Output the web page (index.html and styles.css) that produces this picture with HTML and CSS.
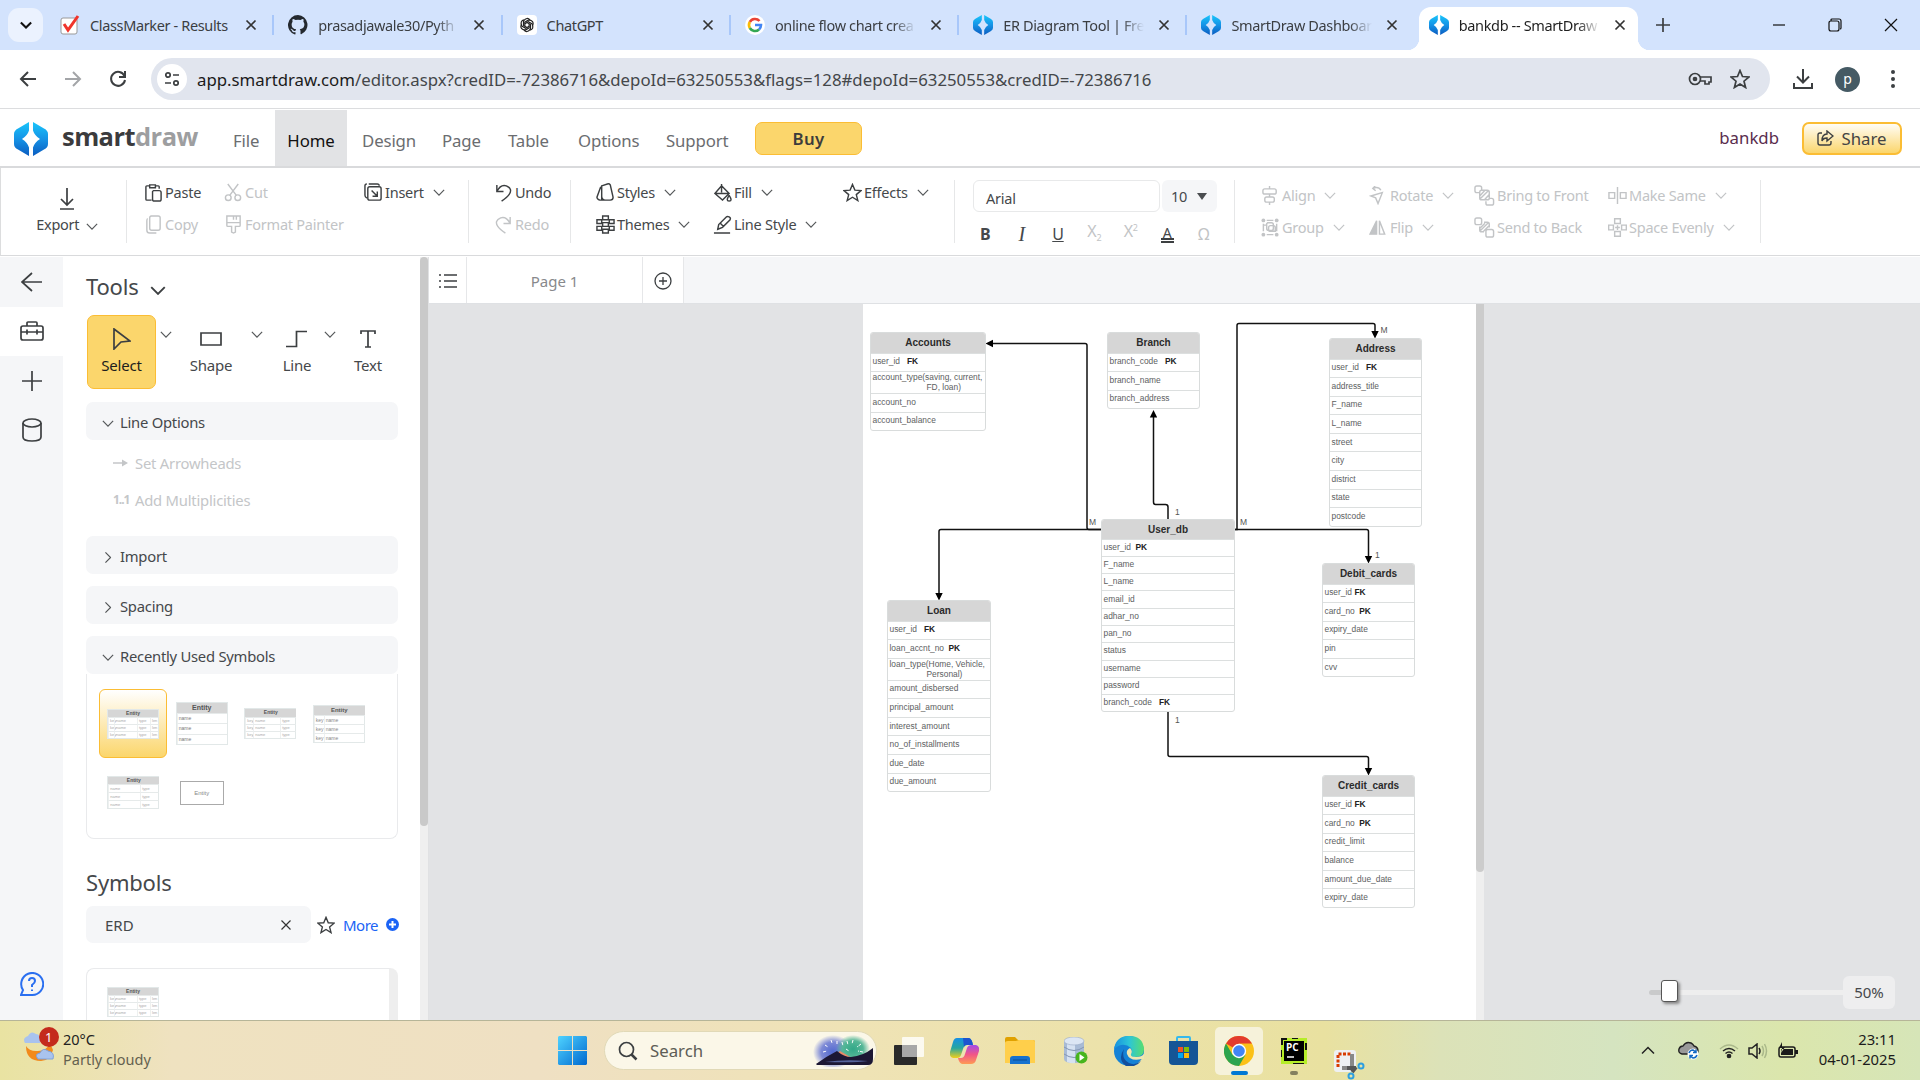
FILE: index.html
```html
<!DOCTYPE html>
<html lang="en">
<head>
<meta charset="utf-8">
<title>bankdb -- SmartDraw</title>
<link rel="stylesheet" href="styles.css">
</head>
<body>
<svg class="defs" width="0" height="0">
  <defs>
    <linearGradient id="sdg" x1="0" y1="0" x2="0" y2="1"><stop offset="0" stop-color="#19c5fb"/><stop offset=".5" stop-color="#1593e6"/><stop offset="1" stop-color="#0b5cc0"/></linearGradient>
    <symbol id="sd" viewBox="0 0 34 34"><path fill="url(#sdg)" d="M15 0v8.500Q13.500 13.500 8 17q5.500 3.500 7 8.500V34L4 27.500Q0 25.500 0 22V12Q0 8.500 4 6.500zM19 0v8.500q1.500 5 7 8.500-5.500 3.500-7 8.500V34l11-6.500q4-2 4-5.500V12q0-3.500-4-5.500z"/></symbol>
    <symbol id="close" viewBox="0 0 12 12"><path d="M1.500 1.500l9 9m0-9l-9 9"/></symbol>
    <symbol id="down" viewBox="0 0 14 8"><path d="M1 1l6 6 6-6"/></symbol>
    <symbol id="star" viewBox="0 0 20 20"><path d="M10 1.500l2.500 6 6.500.5-5 4.200 1.600 6.300L10 15l-5.600 3.500L6 12.200 1 8l6.500-.5z"/></symbol>
    <symbol id="paste" viewBox="0 0 20 20"><path d="M6 3H3a1 1 0 0 0-1 1v13a1 1 0 0 0 1 1h5M12 3h3a1 1 0 0 1 1 1v2M6 2h6v3H6zM10 8h6q2 0 2 2v7q0 2-2 2h-5q-2 0-2-2V9z"/></symbol>
    <symbol id="copy" viewBox="0 0 20 20"><path d="M7 1h8q2 0 2 2v11q0 2-2 2H8q-2 0-2-2V3q0-2 2-2M4 4q-1 0-1 2v10q0 3 3 3h7"/></symbol>
    <symbol id="cut" viewBox="0 0 20 20"><path d="M4 1l9 12M15 1L6 13"/><circle cx="4.500" cy="15.500" r="3"/><circle cx="14.500" cy="15.500" r="3"/></symbol>
    <symbol id="brush" viewBox="0 0 20 20"><path d="M3 1h14v10q0 1-1 1h-4v6l-2 1-2-1v-6H4q-1 0-1-1zM3 8h14M10 1v4M13 1v4"/></symbol>
    <symbol id="insert" viewBox="0 0 20 20"><path d="M5 1h9q2 0 2 2M3 1q-2 0-2 2v10q0 2 2 3M6 4h10q2 0 2 2v10q0 2-2 2H6q-2 0-2-2V6q0-2 2-2M8 8l6 6M14 9v5H9"/></symbol>
    <symbol id="undo" viewBox="0 0 20 20"><path d="M3 2v7h7M3 9Q7 1 13 3q7 3 3 9-2 3-8 7"/></symbol>
    <symbol id="redo" viewBox="0 0 20 20"><path d="M17 2v7h-7M17 9Q13 1 7 3 0 6 4 12q2 3 8 7"/></symbol>
    <symbol id="styles" viewBox="0 0 20 20"><path d="M6 3l6-2q2-.5 3 1l3 13q0 3-3 3H6zM5 4L1 15q0 2 3 3h4M6 4v10q0 4 4 4"/></symbol>
    <symbol id="themes" viewBox="0 0 20 20"><path d="M7 1h6v4H7zM7 8h6v4H7zM7 15h6v4H7zM1 5h5v4H1zM1 12h5v4H1zM14 5h5v4h-5zM14 12h5v4h-5z"/></symbol>
    <symbol id="fill" viewBox="0 0 20 20"><path d="M9 1v9M9 3l8 8-7 7-8-7zM2 11h14M17 13q-4 6 0 6t0-6"/></symbol>
    <symbol id="pen" viewBox="0 0 20 20"><path d="M1 19h17M5 15l1-5 8-8q1-1 3 0t1 3l-8 8zM8 9l3 3"/></symbol>
    <symbol id="align" viewBox="0 0 20 20"><path d="M9 0v3M9 8.500v3M9 17v3M4 3h10q2 0 2 2v1.500q0 2-2 2H4q-2 0-2-2V5q0-2 2-2M6 11.500h6q2 0 2 2V15q0 2-2 2H6q-2 0-2-2v-1.500q0-2 2-2"/></symbol>
    <symbol id="group" viewBox="0 0 20 20"><g fill="currentColor" stroke="none"><circle cx="2.500" cy="2.500" r="2"/><circle cx="16.500" cy="2.500" r="2"/><circle cx="2.500" cy="17.500" r="2"/><circle cx="16.500" cy="17.500" r="2"/></g><path d="M6 2.500h7M6 17.500h7M2.500 6v8M16.500 6v8M3 7.500h3M7 5h4q2 0 2 2v4q0 2-2 2H8q-2 0-2-2V6zM10 8h3q2 0 2 2v4H9q-1 0-1-2v-2q0-2 2-2"/></symbol>
    <symbol id="rotate" viewBox="0 0 20 20"><path d="M2 10.500L14 7 9.500 18.500l-2.500-6zM12.500 4.500Q10 0 4 2.500M6.500 0L4 2.500l3 2.500"/></symbol>
    <symbol id="flip" viewBox="0 0 20 20"><path d="M8 3v14H1z" fill="currentColor"/><path d="M11 3v14h5.500z"/></symbol>
    <symbol id="front" viewBox="0 0 22 22"><path d="M5.500 8H3Q1 8 1 6V3q0-2 2-2h3q2 0 2 2v2M16.500 14h2q2 0 2 2v3q0 2-2 2h-4q-2 0-2-2v-2M8 5.500h6q2 0 2 2v6q0 2-2 2H8q-2 0-2-2v-6q0-2 2-2M6.500 11l5-5.500M6.500 14.500l9-9M11 15.500l5-5.500"/></symbol>
    <symbol id="back" viewBox="0 0 22 22"><path d="M3 1h3q2 0 2 2v3q0 2-2 2H3Q1 8 1 6V3q0-2 2-2M14.500 13h4q2 0 2 2v4q0 2-2 2h-4q-2 0-2-2v-4q0-2 2-2M10.500 5.500H14q2 0 2 2V11M6 10v3.500q0 2 2 2h2.500M6.500 14.500l9-9M10 15l5.500-5.500M6.500 11.500l5-5"/></symbol>
    <symbol id="same" viewBox="0 0 20 20"><path d="M10 1v18M1 7h6v6H1zM13 7h6v6h-6z"/></symbol>
    <symbol id="space" viewBox="0 0 20 20"><path d="M7 .700h6v5H7zM7 14.300h6v5H7zM.700 7.500h5v5h-5zM14.300 7.500h5v5h-5zM10 7.500v5M7.500 10h5"/></symbol>
  </defs>
</svg>

<header class="tabs">
  <span class="tabsearch"><svg class="ic" width="12" height="8"><use href="#down"/></svg></span>
  <div class="tab"><svg class="fav" viewBox="0 0 20 20"><rect x="1" y="3" width="16" height="16" rx="2" fill="#fff" stroke="#999"/><path d="M4 9l4 6L18 1" fill="none" stroke="#f0342c" stroke-width="3"/></svg><span class="tt">ClassMarker - Results</span><svg class="x"><use href="#close"/></svg></div>
  <div class="tab"><svg class="fav" viewBox="0 0 16 16"><path fill="#24292f" d="M8 0a8 8 0 0 0-2.500 15.600c.4.100.5-.2.500-.4v-1.500c-2.200.5-2.700-1-2.700-1-.4-.9-.9-1.200-.9-1.200-.7-.5.100-.5.100-.5.800.1 1.200.8 1.200.8.700 1.300 1.900.9 2.300.7.100-.5.300-.9.500-1.100-1.800-.2-3.600-.9-3.600-4 0-.9.300-1.600.8-2.100-.1-.2-.4-1 .1-2.100 0 0 .7-.2 2.200.8a7.600 7.600 0 0 1 4 0c1.500-1 2.200-.8 2.200-.8.400 1.100.2 1.900.1 2.100.5.600.8 1.300.8 2.100 0 3.100-1.900 3.700-3.700 3.900.3.300.6.800.6 1.500v2.200c0 .2.100.5.600.4A8 8 0 0 0 8 0"/></svg><span class="tt fade">prasadjawale30/Pyth</span><svg class="x"><use href="#close"/></svg></div>
  <div class="tab"><svg class="fav" viewBox="0 0 20 20"><rect width="20" height="20" rx="4" fill="#fff"/><g fill="none" stroke="#222" stroke-width="1.200"><path id="pet" d="M10 7.500l3.500 2v4.500Q10 18.500 7 15"/><use href="#pet" transform="rotate(60 10 10)"/><use href="#pet" transform="rotate(120 10 10)"/><use href="#pet" transform="rotate(180 10 10)"/><use href="#pet" transform="rotate(240 10 10)"/><use href="#pet" transform="rotate(300 10 10)"/></g></svg><span class="tt">ChatGPT</span><svg class="x"><use href="#close"/></svg></div>
  <div class="tab"><svg class="fav" viewBox="0 0 20 20"><circle cx="10" cy="10" r="10" fill="#fff"/><g fill="none" stroke-width="2.600"><path d="M14.500 6A6 6 0 0 0 4.800 7" stroke="#ea4335"/><path d="M4.800 7a6 6 0 0 0 0 6" stroke="#fbbc05"/><path d="M4.800 13a6 6 0 0 0 9.200 1.500" stroke="#34a853"/><path d="M14 14.500q2-2 2-4.500h-6" stroke="#4285f4"/></g></svg><span class="tt fade">online flow chart crea</span><svg class="x"><use href="#close"/></svg></div>
  <div class="tab"><svg class="fav"><use href="#sd"/></svg><span class="tt fade">ER Diagram Tool | Fre</span><svg class="x"><use href="#close"/></svg></div>
  <div class="tab last"><svg class="fav"><use href="#sd"/></svg><span class="tt fade">SmartDraw Dashboar</span><svg class="x"><use href="#close"/></svg></div>
  <div class="tab active"><svg class="fav"><use href="#sd"/></svg><span class="tt fade">bankdb -- SmartDraw</span><svg class="x"><use href="#close"/></svg></div>
  <svg class="ic newtab" width="14" height="14" viewBox="0 0 14 14"><path d="M7 0v14M0 7h14"/></svg>
  <div class="win"><svg class="thin" width="14" height="14" viewBox="0 0 14 14"><path d="M1 7h12"/></svg><svg class="thin" width="14" height="14" viewBox="0 0 14 14"><path d="M3 3V2q0-1 1-1h7q2 0 2 2v7q0 1-1 1M1 5q0-2 2-2h6q2 0 2 2v6q0 2-2 2H3q-2 0-2-2z"/></svg><svg class="thin" width="14" height="14" viewBox="0 0 14 14"><path d="M1 1l12 12M13 1L1 13"/></svg></div>
</header>

<nav class="addr">
  <svg class="ic" width="18" height="18" viewBox="0 0 18 18"><path d="M17 9H2M9 2L2 9l7 7"/></svg>
  <svg class="ic dim" width="18" height="18" viewBox="0 0 18 18"><path d="M1 9h15M9 2l7 7-7 7"/></svg>
  <svg class="ic" width="18" height="18" viewBox="0 0 18 18"><path d="M15.500 6A7 7 0 1 0 16 10M16 1v6h-6"/></svg>
  <div class="omni">
    <span class="site"><svg class="ic" width="16" height="16" viewBox="0 0 16 16"><circle cx="4" cy="4" r="2.200"/><path d="M9 4h6M1 12h6"/><circle cx="12" cy="12" r="2.200"/></svg></span>
    <span class="url"><b>app.smartdraw.com</b>/editor.aspx?credID=-72386716&amp;depoId=63250553&amp;flags=128#depoId=63250553&amp;credID=-72386716</span>
    <svg class="ic" width="24" height="14" viewBox="0 0 24 14"><circle cx="7" cy="7" r="5.500"/><circle cx="7" cy="7" r="1.500" fill="#444"/><path d="M12 5h11v5h-2v2h-4v-3h-5"/></svg>
    <svg class="ic" width="20" height="20"><use href="#star"/></svg>
  </div>
  <svg class="ic dl" width="22" height="22" viewBox="0 0 22 22"><path d="M11 1v13M5 8.500l6 6 6-6M2 15v5h18v-5"/></svg>
  <span class="avatar">p</span>
  <svg class="dots" width="6" height="20" viewBox="0 0 6 20"><circle cx="3" cy="3" r="2"/><circle cx="3" cy="10" r="2"/><circle cx="3" cy="17" r="2"/></svg>
</nav>

<div class="menu">
  <svg class="logo"><use href="#sd"/></svg><span class="brand">smart<i>draw</i></span>
  <span class="m file">File</span><span class="m home">Home</span><span class="m des">Design</span><span class="m pag">Page</span><span class="m tab-m">Table</span><span class="m opt">Options</span><span class="m sup">Support</span>
  <span class="buy">Buy</span>
  <span class="doc">bankdb</span>
  <span class="share"><svg class="ic" width="17" height="16" viewBox="0 0 17 16"><path d="M5 3H3Q1 3 1 5v8q0 2 2 2h9q2 0 2-2v-2M10 1l6 5-6 5V8Q6 8 5 11q0-7 5-7z"/></svg>Share</span>
</div>

<div class="ribbon">
  <div class="export"><svg class="ic" width="16" height="22" viewBox="0 0 16 22"><path d="M8 0v17M2 11l6 6 6-6M1 21h14"/></svg><span>Export <svg class="ch"><use href="#down"/></svg></span></div>
  <div class="col sep p17"><div class="it"><svg><use href="#paste"/></svg>Paste</div><div class="it off"><svg><use href="#copy"/></svg>Copy</div></div>
  <div class="col"><div class="it off"><svg><use href="#cut"/></svg>Cut</div><div class="it off"><svg><use href="#brush"/></svg>Format Painter</div></div>
  <div class="col"><div class="it"><svg><use href="#insert"/></svg>Insert<svg class="ch"><use href="#down"/></svg></div></div>
  <div class="col sep p25"><div class="it"><svg><use href="#undo"/></svg>Undo</div><div class="it off"><svg><use href="#redo"/></svg>Redo</div></div>
  <div class="col sep p25"><div class="it"><svg><use href="#styles"/></svg>Styles<svg class="ch"><use href="#down"/></svg></div><div class="it"><svg><use href="#themes"/></svg>Themes<svg class="ch"><use href="#down"/></svg></div></div>
  <div class="col"><div class="it"><svg><use href="#fill"/></svg>Fill<svg class="ch"><use href="#down"/></svg></div><div class="it"><svg><use href="#pen"/></svg>Line Style<svg class="ch"><use href="#down"/></svg></div></div>
  <div class="col"><div class="it"><svg><use href="#star"/></svg>Effects<svg class="ch"><use href="#down"/></svg></div></div>
  <div class="font sep">
    <div class="boxes"><span class="face">Arial</span><span class="size">10<i class="caret"></i></span></div>
    <div class="fmt"><b>B</b><i>I</i><u>U</u><span class="off up">X<sub>2</sub></span><span class="off up">X<sup>2</sup></span><span class="acol">A</span><span class="off">Ω</span></div>
  </div>
  <div class="col sep p28 low"><div class="it off"><svg><use href="#align"/></svg>Align<svg class="ch"><use href="#down"/></svg></div><div class="it off"><svg><use href="#group"/></svg>Group<svg class="ch"><use href="#down"/></svg></div></div>
  <div class="col low"><div class="it off"><svg><use href="#rotate"/></svg>Rotate<svg class="ch"><use href="#down"/></svg></div><div class="it off"><svg><use href="#flip"/></svg>Flip<svg class="ch"><use href="#down"/></svg></div></div>
  <div class="col low big"><div class="it off"><svg><use href="#front"/></svg>Bring to Front</div><div class="it off"><svg><use href="#back"/></svg>Send to Back</div></div>
  <div class="col low"><div class="it off"><svg><use href="#same"/></svg>Make Same<svg class="ch"><use href="#down"/></svg></div><div class="it off"><svg><use href="#space"/></svg>Space Evenly<svg class="ch"><use href="#down"/></svg></div></div>
  <div class="sep"></div>
</div>

<main class="work">
  <aside class="rail">
    <span><svg class="ic" width="22" height="20" viewBox="0 0 22 20"><path d="M21 10H1M11 1l-10 9 10 9"/></svg></span>
    <span class="on"><svg class="ic" width="24" height="20" viewBox="0 0 24 20"><path d="M3 5h18q2 0 2 2v10q0 2-2 2H3q-2 0-2-2V7q0-2 2-2M7 5V2q0-1 1-1h8q1 0 1 1v3M1 11h22M7 8.500v5M17 8.500v5"/></svg></span>
    <span><svg class="ic" width="20" height="20" viewBox="0 0 20 20"><path d="M10 0v20M0 10h20"/></svg></span>
    <span><svg class="ic" width="20" height="24" viewBox="0 0 20 24"><ellipse cx="10" cy="5" rx="9" ry="4"/><path d="M1 5v14q0 4 9 4t9-4V5"/></svg></span>
    <span class="help"><svg width="24" height="24" viewBox="0 0 24 24"><path d="M1 23h11A11 11 0 1 0 3 18z"/><path d="M9 9q0-3 3-3t3 3q0 2-3 4v2M12 17.500v1.500"/></svg></span>
  </aside>

  <section class="panel">
    <h2>Tools <svg class="ic" width="16" height="9"><use href="#down"/></svg></h2>
    <div class="tools">
      <div class="tool sel"><svg class="ic" width="18" height="22" viewBox="0 0 18 22"><path d="M1 1l16 12-9 1-7 7z"/></svg>Select</div><svg class="ch"><use href="#down"/></svg>
      <div class="tool shape"><svg class="ic" width="22" height="22" viewBox="0 0 22 22"><path d="M1 5h20v12H1z"/></svg>Shape</div><svg class="ch ch2"><use href="#down"/></svg>
      <div class="tool line"><svg class="ic" width="22" height="22" viewBox="0 0 22 22"><path d="M0 18.500h10.500v-15H21"/></svg>Line</div><svg class="ch ch3"><use href="#down"/></svg>
      <div class="tool text"><svg class="ic" width="16" height="22" viewBox="0 0 16 22"><path d="M1 6V3h14v3M8 3v16M5 19h6"/></svg>Text</div>
    </div>
    <div class="acc"><svg class="ch"><use href="#down"/></svg>Line Options</div>
    <div class="opts">
      <div><svg width="15" height="8" viewBox="0 0 15 8"><path d="M0 4h10" stroke="#c4c6c8" stroke-width="1.500"/><path d="M9 .5L15 4 9 7.500z" fill="#c4c6c8"/></svg>Set Arrowheads</div>
      <div><b>1..1</b>Add Multiplicities</div>
    </div>
    <div class="acc"><svg class="ch right"><use href="#down"/></svg>Import</div>
    <div class="acc"><svg class="ch right"><use href="#down"/></svg>Spacing</div>
    <div class="acc rec"><svg class="ch"><use href="#down"/></svg>Recently Used Symbols</div>
    <div class="recent">
      <span class="cell chosen"><span class="mini four"><b>Entity</b><i>key</i><i>name</i><i>type</i><i>len</i><i>key</i><i>name</i><i>type</i><i>len</i><i>key</i><i>name</i><i>type</i><i>len</i></span></span>
      <span class="cell"><span class="mini one"><b>Entity</b><i>name</i><i>name</i><i>name</i></span></span>
      <span class="cell"><span class="mini three"><b>Entity</b><i>key</i><i>name</i><i>type</i><i>key</i><i>name</i><i>type</i><i>key</i><i>name</i><i>type</i></span></span>
      <span class="cell"><span class="mini two"><b>Entity</b><i>key</i><i>name</i><i>key</i><i>name</i><i>key</i><i>name</i></span></span>
      <span class="cell"><span class="mini wide"><b>Entity</b><i>name</i><i>type</i><i>name</i><i>type</i><i>name</i><i>type</i></span></span>
      <span class="cell"><span class="plain">Entity</span></span>
    </div>
    <h2 class="sym">Symbols</h2>
    <div class="find"><span class="q">ERD<svg class="x"><use href="#close"/></svg></span><svg class="ic" width="18" height="18"><use href="#star"/></svg><span class="more">More</span><svg width="13" height="13" viewBox="0 0 13 13"><circle cx="6.500" cy="6.500" r="6.500" fill="#1b63f5"/><path d="M6.500 3v7M3 6.500h7" stroke="#fff" stroke-width="2"/></svg></div>
    <div class="library"><span class="mini four"><b>Entity</b><i>key</i><i>name</i><i>type</i><i>len</i><i>key</i><i>name</i><i>type</i><i>len</i><i>key</i><i>name</i><i>type</i><i>len</i></span></div>
  </section>
  <div class="scroll"><span></span></div>

  <section class="stage">
    <div class="pages"><span class="pg list"><svg class="ic" width="20" height="16" viewBox="0 0 20 16"><path d="M6 2h13M6 8h13M6 14h13M1 2h2M1 8h2M1 14h2"/></svg></span><span class="pg name">Page 1</span><span class="pg add"><svg class="ic" width="18" height="18" viewBox="0 0 18 18"><circle cx="9" cy="9" r="8"/><path d="M9 5v8M5 9h8"/></svg></span></div>
    <div class="canvas">
      <div class="paper">
        <svg class="wires" viewBox="863 304 613 716">
          <g fill="none" stroke="#111" stroke-width="1.500">
            <path d="M992 343.500h93q2 0 2 2V527.500q0 2 2 2h12"/>
            <path d="M1101 529.500H941q-2 0-2 2V594"/>
            <path d="M1153.500 416v86q0 2.500 2 2.500h10q2.500 0 2.500 2.500v13"/>
            <path d="M1235 529.500h2V325.500q0-2 2-2h134q2 0 2 2V332"/>
            <path d="M1235 529.500h131.500q2 0 2 2V557"/>
            <path d="M1168 712v42.500q0 2 2 2h196.500q2 0 2 2V769"/>
          </g>
          <path d="M985.500 343.500l7.500-3.700v7.400zM939 600.500l-3.700-7.500h7.400zM1153.500 410l-3.700 7.500h7.400zM1375 338.500l-3.700-7.500h7.400zM1368.500 563.500l-3.700-7.500h7.400zM1368.500 775.500l-3.700-7.500h7.400z"/>
          <g class="wl"><text x="1089" y="525">M</text><text x="1175" y="515">1</text><text x="1240" y="525">M</text><text x="1380.500" y="333">M</text><text x="1375" y="558">1</text><text x="1175" y="723">1</text></g>
        </svg>
        <div class="node accounts"><h3>Accounts</h3><p>user_id <b class="g3">FK</b></p><p class="tall">account_type(saving, current,<br><span>FD, loan)</span></p><p>account_no</p><p>account_balance</p></div>
        <div class="node branch"><h3>Branch</h3><p>branch_code <b class="g3">PK</b></p><p>branch_name</p><p>branch_address</p></div>
        <div class="node address"><h3>Address</h3><p>user_id <b class="g3">FK</b></p><p>address_title</p><p>F_name</p><p>L_name</p><p>street</p><p>city</p><p>district</p><p>state</p><p>postcode</p></div>
        <div class="node user"><h3>User_db</h3><p>user_id <b class="g2">PK</b></p><p>F_name</p><p>L_name</p><p>email_id</p><p>adhar_no</p><p>pan_no</p><p>status</p><p>username</p><p>password</p><p>branch_code <b class="g3">FK</b></p></div>
        <div class="node loan"><h3>Loan</h3><p>user_id <b class="g3">FK</b></p><p>loan_accnt_no <b class="g2">PK</b></p><p class="tall">loan_type(Home, Vehicle,<br><span>Personal)</span></p><p>amount_disbersed</p><p>principal_amount</p><p>interest_amount</p><p>no_of_installments</p><p>due_date</p><p>due_amount</p></div>
        <div class="node debit"><h3>Debit_cards</h3><p>user_id <b>FK</b></p><p>card_no <b class="g2">PK</b></p><p>expiry_date</p><p>pin</p><p>cvv</p></div>
        <div class="node credit"><h3>Credit_cards</h3><p>user_id <b>FK</b></p><p>card_no <b class="g2">PK</b></p><p>credit_limit</p><p>balance</p><p>amount_due_date</p><p>expiry_date</p></div>
      </div>
      <div class="scroll doc-scroll"><span></span></div>
      <div class="zoom"><span class="track"><i></i></span><span class="pct">50%</span></div>
    </div>
  </section>
</main>

<footer class="task">
  <div class="weather">
    <svg width="36" height="38" viewBox="0 0 36 38"><path d="M3 19q0 15 15 15 9 0 12-11l-3-7q-4 9-14 8Q6 24 3 19" fill="#f28a1c"/><path d="M2 16q-3-5 3-7 3-6 8-2 6 1 4 9z" fill="#a9c3ee"/><path d="M15 32q-4-5 2-6 3-6 8-2 7 1 5 8z" fill="#a9c3ee" stroke="#7fa2dc"/><circle cx="26" cy="10" r="10" fill="#c42b1c"/></svg>
    <span class="badge">1</span>
    <p>20°C<br><span>Partly cloudy</span></p>
  </div>
  <div class="apps">
    <svg width="29" height="29" viewBox="0 0 29 29"><defs><linearGradient id="wg" x2="1" y2="1"><stop stop-color="#4fd3ff"/><stop offset="1" stop-color="#0068cf"/></linearGradient></defs><path fill="url(#wg)" d="M1 0h13v14H0V1zM15 0h13l1 1v13H15zM0 15h14v14H1l-1-1zM15 15h14v13l-1 1H15z"/></svg>
    <div class="search"><svg class="ic" width="20" height="20" viewBox="0 0 20 20"><circle cx="8.500" cy="8.500" r="7"/><path d="M13.500 13.500l5 5" stroke-width="2.500"/></svg>Search
      <svg width="60" height="32" viewBox="0 0 60 32"><defs><radialGradient id="fa"><stop stop-color="#5269d0"/><stop offset=".6" stop-color="#7e8ad6"/><stop offset="1" stop-color="#7e8ad6" stop-opacity="0"/></radialGradient><radialGradient id="fb"><stop stop-color="#32a888"/><stop offset=".6" stop-color="#55b797"/><stop offset="1" stop-color="#55b797" stop-opacity="0"/></radialGradient></defs><ellipse cx="20" cy="17" rx="20" ry="17" fill="url(#fa)"/><ellipse cx="40" cy="14" rx="17" ry="14" fill="url(#fb)"/><path d="M20 21l7-5 12 7z" fill="#e88a68"/><path d="M3 29Q14 21 24 16q7 6 14 6 12-1 22-9v11q0 6-5 6H4z" fill="#1c1734"/><path d="M12 27q20-3 43-1-12 2-43 1" fill="#56649d"/><path d="M18 5l1 3M12 10l3 2M24 6v3M10 17l4-1M34 6l1 4M40 5l-1 4M48 9l-4 3M50 17l-5-1M29 7l1 4M33 14l3 2" stroke="#fff" stroke-dasharray="3 1"/></svg>
    </div>
    <svg width="30" height="28" viewBox="0 0 30 28"><rect y="8" width="23" height="20" rx="1" fill="#2a2a2a"/><rect x="8" width="22" height="20" rx="1" fill="#fff" fill-opacity=".8"/><path d="M8 8h15v12H8z" fill="#a8a8a8"/></svg>
    <svg width="29" height="26" viewBox="0 0 29 26"><defs><linearGradient id="ca" x2="0" y2="1"><stop stop-color="#168fe6"/><stop offset=".5" stop-color="#25a6a0"/><stop offset="1" stop-color="#f2cf19"/></linearGradient><linearGradient id="cb" x2="0" y2="1"><stop stop-color="#a24be8"/><stop offset=".5" stop-color="#f15687"/><stop offset="1" stop-color="#ff9b53"/></linearGradient></defs><path fill="url(#ca)" d="M7 0h12q3 1 4 7h-6q-3 0-4 4l-2 6q-1 3-4 3H3q-4-1-3-6L3 4q1-4 4-4"/><path fill="#1c54cf" d="M13 0h6q3 1 4 7h-6q-3 0-3 3z"/><path fill="url(#cb)" d="M22 7h4q4 1 3 6l-3 9q-1 4-5 4h-9q-3-1-4-6h3q3 0 4-4l2-6q1-3 5-3"/></svg>
    <svg width="30" height="27" viewBox="0 0 30 27"><path d="M0 2q0-2 2-2h8l3 3h15q2 0 2 2v5H0z" fill="#e0a100"/><path d="M0 6q0-2 3-2h8l3-1h14q2 0 2 2v21H0z" fill="#ffcf4b"/><path d="M5 22q0-3 3-3h14q3 0 3 3v5H5z" fill="#1672cf"/><path d="M8 23h14" stroke="#0b4c94"/></svg>
    <svg width="24" height="27" viewBox="0 0 24 27"><path d="M0 4v18q0 4 10 4t10-4V4" fill="#a8bbd6"/><path d="M3 5v20q5 2 8 1V7z" fill="#d6e2f2"/><ellipse cx="10" cy="4" rx="10" ry="4" fill="#dce6f4" stroke="#9aabc6" stroke-width=".6"/><path d="M0 10q10 7 20 0M0 17q10 7 20 0" fill="none" stroke="#8496b4"/><circle cx="17.500" cy="20.500" r="6" fill="#47b51e"/><path d="M15.500 17l5 3.500-5 3.500z" fill="#fff"/></svg>
    <svg width="30" height="30" viewBox="0 0 30 30"><defs><linearGradient id="ea" x2="1"><stop stop-color="#1790e0"/><stop offset=".5" stop-color="#2cc5d8"/><stop offset="1" stop-color="#59de6e"/></linearGradient></defs><circle cx="15" cy="15" r="15" fill="#1582d6"/><path fill="url(#ea)" d="M0 13Q2 0 15 0q14 0 15 13 0 8-9 8-5 0-5-3 3-2 1-6Q9 5 0 13"/><path fill="#134f9c" d="M10 13q-3 10 5 14 6 3 12-2-5 7-15 5Q3 23 10 13"/><path fill="#f0e6b0" d="M16 12q-4 2-3 6 3 8 15 5l3 0V16q-2 5-9 5-6 0-5-3 2-3-1-6"/></svg>
    <svg width="29" height="30" viewBox="0 0 29 30"><path d="M8 6V2q0-1 1-1h11q1 0 1 1v4" fill="none" stroke="#35b9ed" stroke-width="2"/><path d="M0 5h29v20q0 4-4 4H4q-4 0-4-4z" fill="#155596"/><path d="M9 11h5v5H9z" fill="#f35325"/><path d="M15 11h5v5h-5z" fill="#81bc06"/><path d="M9 17h5v5H9z" fill="#05a6f0"/><path d="M15 17h5v5h-5z" fill="#ffba08"/></svg>
    <span class="run"><svg width="30" height="30" viewBox="0 0 30 30"><circle cx="15" cy="15" r="15" fill="#fbc117"/><path d="M15 15L2 7.500A15 15 0 0 1 28 7.500H15z" fill="#e33b2e"/><path d="M2 7.500A15 15 0 0 0 15 30l6.500-11.200L15 15 8.500 18.800z" fill="#2da44e"/><circle cx="15" cy="15" r="7.200" fill="#fff"/><circle cx="15" cy="15" r="5.800" fill="#4285f4"/></svg><i></i></span>
    <span class="pc"><svg width="26" height="26" viewBox="0 0 26 26"><path d="M0 0h26v26H0z" fill="#b6ed29"/><path d="M0 0h6v2H2v5H0zM11 0h6v1h-6zM24 5h2v7h-2zM0 12h1v7H0zM12 25h11v1H12z" fill="#111"/><path d="M3 3h20v20H3z" fill="#000"/><path d="M6 19h7" stroke="#fff" stroke-width="1.500"/></svg><em>PC</em><i></i></span>
    <svg class="snip" width="31" height="30" viewBox="0 0 31 30"><rect width="22" height="22" rx="3" fill="#eef0f3"/><path d="M4 17V4h13" fill="none" stroke="#d83b01" stroke-width="3" stroke-dasharray="3 1.500"/><path d="M18 4v14H8" fill="none" stroke="#888" stroke-width="4"/><path d="M13 18h9M18 22l4-5" stroke="#555" stroke-width="4"/><circle cx="27" cy="16" r="2.500" fill="none" stroke="#2d9fe0" stroke-width="2"/><circle cx="17" cy="26" r="2.500" fill="none" stroke="#2d9fe0" stroke-width="2"/></svg>
  </div>
  <div class="tray">
    <svg class="ic" width="14" height="9"><use href="#down" transform="rotate(180 7 4.500)"/></svg>
    <svg width="21" height="19" viewBox="0 0 21 19"><path d="M4 13q-4-1-3-5 1-3 4-3 3-5 8-3 2 1 3 3 4 1 4 5 0 3-3 3z" fill="#999" stroke="#222" stroke-width="1.400"/><circle cx="15" cy="13" r="5.500" fill="#fff"/><path d="M11 12q1-3 4-3l3 2M18 8.500v3h-3M19 14q-1 3-4 3l-3-2M12 17.500v-3h3" fill="none" stroke="#1268c4" stroke-width="1.500"/></svg>
    <svg class="ic" width="20" height="16" viewBox="0 0 20 16"><path d="M1 6q9-8 18 0" stroke="#aab88a"/><path d="M4 8q6-5 12 0M6.500 10.500q3.500-3 7 0"/><circle cx="10" cy="13" r="1.600" fill="#222"/></svg>
    <svg class="ic" width="20" height="16" viewBox="0 0 20 16"><path d="M1 5h3l5-4v14l-5-4H1zM11 5q2 3 0 6"/><path d="M14 3q3 5 0 10M16.500 1q4 7 0 14" stroke="#aab88a"/></svg>
    <svg width="20" height="17" viewBox="0 0 20 17"><rect x="1" y="5" width="16" height="10" rx="2" fill="none" stroke="#1a1a1a" stroke-width="1.500"/><path d="M3 7h12v6H3zM17 8h3v4h-3zM4 0L1 6h3l-1 5 4-6H4z" fill="#1a1a1a"/></svg>
    <p>23:11<br>04-01-2025</p>
  </div>
</footer>
</body>
</html>
```
FILE: styles.css
```css
*{box-sizing:border-box}
body{margin:0;width:1920px;height:1080px;overflow:hidden;display:flex;flex-direction:column;font-family:"Noto Sans",sans-serif;font-size:15px;color:#45484b;background:#fff}
p,h2,h3{margin:0;font-weight:400}
svg{flex:none;fill:none}
.defs{position:absolute}
.ic{stroke:#3c3f41;stroke-width:1.7;color:#3c3f41}
.ic.dim{stroke:#a3a5a8}

/* browser tab strip */
.tabs{height:50px;flex:none;background:#d3e3fd;display:flex;align-items:center;padding-left:8px;position:relative}
.tabsearch{width:35px;height:34px;border-radius:11px;background:#ebf2fe;display:grid;place-items:center;margin-right:3px}
.tabsearch .ic{stroke-width:2.4;stroke:#111}
.tab{width:228.3px;height:20px;padding:0 0 0 14px;display:flex;align-items:center;border-right:2px solid #a8c7fa;font-size:14.5px;color:#3b3e42}
.tab.last,.tab.active{border-color:transparent}
.tab.active{border:0;width:219px;height:43px;background:#fff;border-radius:12px 12px 0 0;align-self:flex-end;padding-left:10px;margin-left:3px;padding-bottom:7px;position:relative;color:#1f1f1f}
.tab.active:before,.tab.active:after{content:"";position:absolute;bottom:0;width:12px;height:12px}
.tab.active:before{left:-12px;background:radial-gradient(circle at 0 0,transparent 12px,#fff 12.5px)}
.tab.active:after{right:-12px;background:radial-gradient(circle at 100% 0,transparent 12px,#fff 12.5px)}
.fav{width:20px;height:20px;margin-right:10px}
.tt{width:141px;white-space:nowrap;letter-spacing:-.36px}
.fade{-webkit-mask-image:linear-gradient(90deg,#000 84%,transparent);mask-image:linear-gradient(90deg,#000 84%,transparent)}
.x{width:12px;height:12px;stroke:#333;stroke-width:1.7;margin-left:14px}
.newtab{margin-left:18px}
.win{margin-left:auto;display:flex;gap:42px;padding-right:22px}
.thin{stroke:#111;stroke-width:1.2}

/* address bar */
.addr{height:59px;flex:none;display:flex;align-items:center;padding-left:19px;border-bottom:1px solid #dcdddf}
.addr>.ic{margin-right:27px;stroke-width:2}
.omni{width:1619px;height:42px;margin-left:-3px;background:#e1e5ee;border-radius:21px;display:flex;align-items:center;padding:0 20px 0 6px;gap:18px}
.site{width:30px;height:30px;border-radius:50%;background:#fff;display:grid;place-items:center;margin-right:-8px}
.url{font-size:16.8px;flex:1;color:#44474a;white-space:nowrap}
.url b{font-weight:400;color:#1b1b1b}
.addr>.dl{margin:0 21px 0 22px}
.avatar{width:25px;height:25px;border-radius:50%;background:#455a64;color:#fff;text-align:center;line-height:23px;font-size:14px}
.dots{fill:#3c4043;margin-left:30px}

/* application menu */
.menu{height:59px;flex:none;display:flex;align-items:center;padding-left:14px;border-bottom:2px solid #d9dadc;font-size:16.8px;color:#6b6d70}
.logo{width:34px;height:34px;margin-right:14px;margin-top:3px}
.brand{width:171px;font:700 25.5px "Open Sans",sans-serif;letter-spacing:-.55px;color:#3b3b3d;padding-bottom:3px}
.brand i{font-style:normal;color:#9d9ea0}
.m{white-space:nowrap;padding-top:5px;letter-spacing:-.12px}
.file{width:42px}.home{width:72px;height:56px;line-height:51px;background:#e2e3e5;color:#111;text-align:center}
.des{margin-left:15px;width:80px}.pag{width:66px}.tab-m{width:70px}.opt{width:88px}.sup{width:89px}
.buy{width:107px;height:33px;border:1px solid #fbbd34;border-radius:7px;background:#fbd66c;color:#3c3c3c;font-weight:600;text-align:center;line-height:31px;letter-spacing:.3px;margin-top:1px}
.doc{margin-left:auto;color:#5a2d4e;margin-right:23px}
.share{width:100px;height:33px;margin-right:18px;margin-top:1px;border:2px solid #fbbd34;border-radius:7px;background:linear-gradient(#fffdf6,#fbd66c);display:flex;align-items:center;justify-content:center;gap:7px;color:#444}
.share .ic{stroke-width:1.4}

/* ribbon */
.ribbon{height:88px;flex:none;border-left:1px solid #dcddde;border-bottom:1px solid #d9dadc;display:grid;grid-template-columns:125px 98px 140px 104px 102px 143px 130px 111px 280px 135px 105px 134px 152px 160px;padding:12px 0;font-size:14.5px;letter-spacing:-.24px}
.ribbon>*{height:63px}
.sep{border-left:1px solid #e6e7e8}
.export{display:flex;flex-direction:column;align-items:center;gap:4px;padding:8px 0 0 7px}
.export .ch{margin-left:3px}
.ch{width:12px;height:7px;stroke:#55585a;stroke-width:1.4}
.col{display:flex;flex-direction:column;gap:8px}
.low{padding-top:3px}
.p17{padding-left:17px}.p25{padding-left:25px}.p28{padding-left:26px}
.it{display:flex;align-items:center;height:24px;gap:2px;white-space:nowrap;stroke:#3c3f41;stroke-width:1.5}
.it svg{width:19px;height:19px}
.big .it svg{width:21px;height:21px}
.it .ch{width:12px;height:7px;margin-left:7px;stroke-width:1.4}
.off{color:#c2c4c6;stroke:#c2c4c6}
.off .ch{stroke:#c2c4c6}
.font{padding-left:18px}
.boxes{display:flex;gap:2px;height:32px}
.face{width:187px;border:1px solid #e8e9ea;border-radius:6px;padding:7px 12px 5px;line-height:20px}
.size{width:55px;background:#f5f6f8;border-radius:6px;padding:5px 9px;display:flex;align-items:center;gap:10px}
.caret{border:5px solid transparent;border-top:7px solid #4a4d50;border-bottom:0}
.fmt{display:grid;grid-template-columns:repeat(7,36.4px);height:31px;align-items:center;padding-top:12px;margin-left:-6px;text-align:center;font:16px/20px "Noto Sans",sans-serif}
.fmt>i{font-family:"Liberation Serif",serif;font-size:20px}
.fmt .up{margin-top:-6px}
.fmt sub,.fmt sup{font-size:9px;line-height:0}
.acol{justify-self:center;width:13px;height:17px;line-height:14px;font-size:14px;border-bottom:5px double #3c3f41}

/* work area */
.work{flex:1;display:flex;min-height:0;padding-top:1px}
.rail{width:63px;background:#f5f6f8;display:flex;flex-direction:column}
.rail span{height:49.500px;display:grid;place-items:center}
.rail .on{background:#fff}
.rail .help{margin-top:auto;margin-bottom:11px}
.help svg{stroke:#2a6ff0;stroke-width:2}
.panel{width:357px;padding:14px 22px 0 23px;overflow:hidden}
h2{font-size:22px;line-height:30px;letter-spacing:-.2px}
h2 .ic{margin-left:6px}
.tools{display:flex;margin-top:14px;height:74px;padding-left:1px;letter-spacing:-.2px}
.tools .ch{margin:16px 0 0 4px}
.tools .ch2{margin:16px 3px 0 1px}
.tools .ch3{margin:16px 4px 0 -4px}
.tool{display:flex;flex-direction:column;align-items:center;gap:4px;padding-top:13px;font-size:15px;line-height:22px}
.tool.sel{width:69px;background:#fbd66c;border:1px solid #fbbd34;border-radius:7px;color:#1d1d1d;padding-top:12px}
.shape{width:78px}.line{width:62px}.text{width:56px}
.acc{height:38px;margin-top:12px;background:#f5f6f8;border-radius:7px;padding:1px 0 0 16px;display:flex;align-items:center;gap:6px;font-size:14.8px;letter-spacing:-.25px}
.acc .ch{margin-top:4px}
.right{transform:rotate(-90deg)}
.tools+.acc{margin-top:13px}
.opts{height:84px;padding-top:4px;color:#c4c6c8;font-size:14.8px;letter-spacing:-.22px}
.opts div{height:37px;padding-left:27px;display:flex;align-items:center;gap:7px}
.opts b{font-size:12px;width:15px;letter-spacing:-1px}
.recent{height:165px;border:1px solid #e9eaec;border-top:0;border-radius:0 0 8px 8px;padding:15px 12px 0;display:grid;grid-template-columns:repeat(4,68.500px);grid-template-rows:69px 69px}
.cell{display:grid;place-items:center}
.chosen{border:1px solid #fbbd34;border-radius:6px;background:linear-gradient(#fff,#fbd66c);width:68px}
.mini{width:52px;display:grid;background:#fff;border:1px solid #e2e8e8;font:5px/7px "Liberation Sans",sans-serif;color:#aaa}
.mini b{grid-column:1/-1;background:#d6d6d6;text-align:center;color:#555}
.mini i{font-style:normal;border-top:1px solid #e6eaea;border-left:1px solid #edf0f0;padding-left:1px;font-size:4px;height:7px;line-height:6px}
.mini.four{grid-template-columns:6px 23px 13px 8px}
.mini.three{grid-template-columns:8px 27px 16px;grid-template-rows:8px}.three i{height:7px}
.mini.one{grid-template-rows:10px}.one b{font-size:7px;line-height:10px}.mini.one i{height:10.500px;line-height:9px;font-size:5px;color:#777}
.mini.two{grid-template-columns:10px 41px;grid-template-rows:9px}.two b{font-size:6px;line-height:9px}.mini.two i{height:9px;line-height:8px;font-size:5px;color:#888}
.mini.wide{grid-template-columns:32px 19px}.mini.wide i{height:8px;line-height:7px}
.plain{width:44px;height:24px;border:1.5px solid #aaa;font:6px/22px "Liberation Sans",sans-serif;text-align:center;color:#888}
.sym{margin-top:28px}
.find{display:flex;align-items:center;height:37px;margin-top:9px;white-space:nowrap;gap:7px;margin-right:-2px}
.q{width:225px;height:37px;background:#f5f6f8;border-radius:7px;display:flex;align-items:center;justify-content:space-between;padding:0 19px}
.q .x{stroke-width:1.2;width:12px}
.find .ic{stroke-width:1.5;margin-left:-1px;margin-right:1px}
.more{color:#1b63f5;width:36px;letter-spacing:-.5px}
.library{height:120px;margin-top:25px;border:1px solid #e9eaec;border-right:9px solid #eee;border-radius:8px 8px 0 0;padding:18px 20px;align-items:start}
.scroll{width:8px;background:#efefef}
.scroll span{display:block;width:8px;height:569px;background:#c9c9c9;border-radius:4px}
.stage{flex:1;display:flex;flex-direction:column;border-left:1px solid #e0e1e3}
.pages{height:47px;background:#f5f6f8;border-bottom:1px solid #dfe1e4;display:flex}
.pg{background:#fff;border-right:1px solid #e6e7e9;display:grid;place-items:center;height:46px;padding-top:1px;color:#88898c}
.list{width:38px}.name{width:176px}.add{width:41px}
.pg .ic{stroke-width:1.3}
.canvas{flex:1;background:#e2e3e5;display:flex;padding-left:434px;position:relative;min-height:0}
.paper{width:613px;background:#fff;position:relative;overflow:hidden}
.doc-scroll span{height:568px;background:#ccc;border-radius:0 0 4px 4px}
.wires{position:absolute;inset:0;width:613px;height:716px}
.wires>path{fill:#000}
.wl{fill:#555;font:8.5px "Liberation Sans",sans-serif}

/* entities on the drawing */
.node{position:absolute;border:1px solid #d9dcdc;border-radius:3px;background:#fff;font:8.4px/10px "Liberation Sans",sans-serif;color:#5c5e61;overflow:hidden;--r:18.600px}
.node h3{height:19.500px;background:#d6d6d6;font-weight:700;font-size:10px;line-height:20px;text-align:center;color:#2b2b2b}
.node p{height:var(--r);border-top:1px solid #dcdfdf;padding:0 0 2px 1.5px;white-space:nowrap;display:flex;align-items:center}
.node b{color:#222;margin-left:2.5px}
.node .g2{margin-left:4.5px}.node .g3{margin-left:7px}
.node .tall{height:22px;display:block;line-height:10px;padding-top:0}
.tall span{margin-left:54px}
.loan .tall span{margin-left:37px}
.accounts{left:7px;top:28px;width:116px}
.branch{left:244px;top:28px;width:93px}
.address{left:466px;top:34px;width:93px}
.user{left:238px;top:215px;width:134px;--r:17.300px}
.user h3{height:18.500px;line-height:19px}
.loan{left:24px;top:296px;width:104px}
.debit{left:459px;top:259px;width:93px}
.credit{left:459px;top:471px;width:93px}
.zoom{position:absolute;right:25px;bottom:11px;display:flex;align-items:center}
.track{width:194px;height:5px;border-radius:3px 0 0 3px;background:linear-gradient(90deg,#c9cacb 14px,#eee 14px);display:flex;align-items:center;padding-left:12px}
.track i{width:17px;height:22px;background:#fff;border:1px solid #555;border-radius:3px;box-shadow:2px 2px 3px #888;margin-top:-3px}
.pct{width:52px;height:33px;background:#eeeeef;border-radius:6px;line-height:33px;text-align:center}

/* taskbar */
.task{height:60px;flex:none;border-top:1px solid #b6b598;background:linear-gradient(90deg,#e9e3a2 0,#efe2c0 9%,#efe0c3 28%,#efe3b5 45%,#e9e1a0 69%,#dce2b8 75%,#d5e4c0 84%,#dbe6ac 93%,#d6e5b8);display:flex;position:relative}
.weather{width:558px;padding:6px 0 0 23px;display:flex;gap:4px;position:relative;font-size:14.5px;line-height:20px;color:#222}
.weather p{padding-top:2px}
.weather span{color:#64614f}
.weather .badge{position:absolute;left:45px;top:6px;color:#fff;font-size:13px}
.apps{display:flex;align-items:center}
.search{width:273px;height:39px;margin:0 17px;border-radius:20px;background:#fbf7e8;border:1px solid #e1d9b7;display:flex;align-items:center;padding:0 3px 0 13px;font-size:16.8px;color:#5e5d56;gap:12px}
.search svg:last-child{margin-left:auto}
.search+svg{margin-right:26px}
.search+svg+svg{margin-right:26px}
.search+svg+svg+svg{margin-right:29px}
.search+svg+svg+svg+svg{margin-right:26px}
.search+svg+svg+svg+svg+svg{margin-right:25px}
.search+svg+svg+svg+svg+svg+svg{margin-right:17px}
.run{width:48px;height:48px;background:#f6f2da;border-radius:5px;position:relative;display:grid;place-items:center}
.run i,.pc i{position:absolute;left:16px;bottom:0;width:17px;height:4px;border-radius:2px;background:#0078d4}
.pc{position:relative;width:26px;height:48px;display:grid;place-items:center;margin:0 27px 0 18px}
.pc i{left:9px;width:8px;background:#85815f}
.pc em{position:absolute;left:5px;top:13px;font:700 10px "Open Sans",sans-serif;color:#fff}
.snip{margin-top:28px}
.tray{margin-left:auto;display:flex;align-items:center;padding-right:24px;color:#1c1c1c}
.tray .ic{stroke:#222;stroke-width:1.5}
.tray svg:nth-child(1){margin-right:23px}
.tray svg:nth-child(2){margin-right:20px}
.tray svg:nth-child(3){margin-right:9px}
.tray svg:nth-child(4){margin-right:10px}
.tray p{width:98px;text-align:right;font-size:14.8px;line-height:20px;white-space:nowrap;margin-top:-3px}
```
